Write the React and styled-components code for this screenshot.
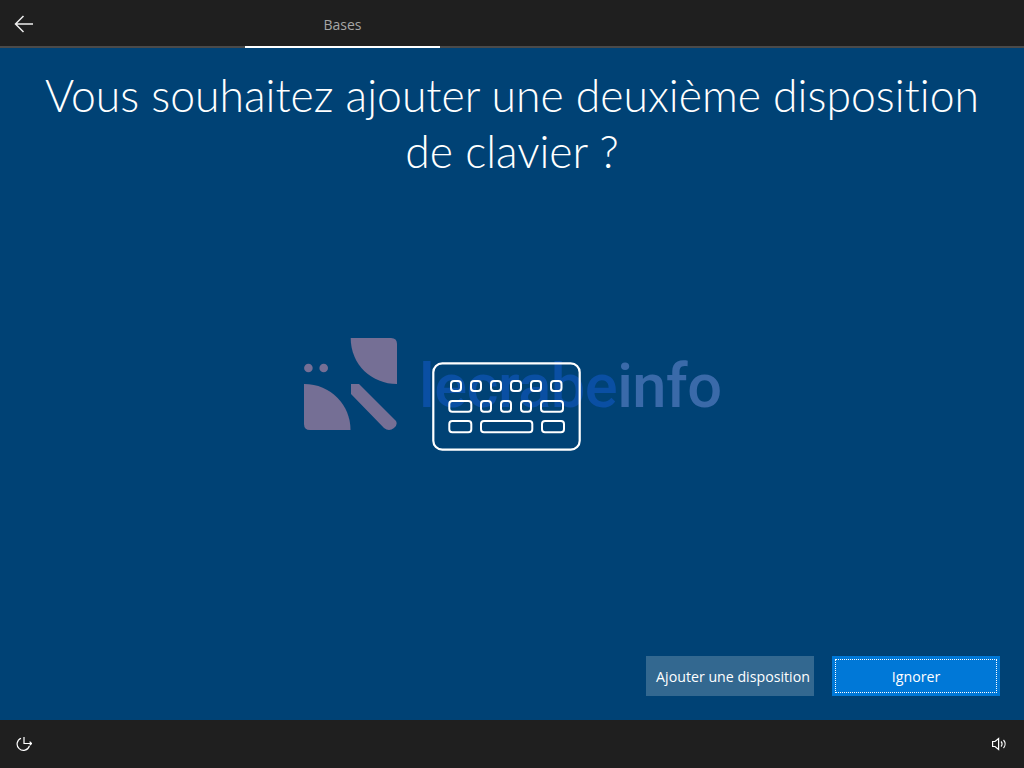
import React from "react";
import styled, { createGlobalStyle } from "styled-components";

const Global = createGlobalStyle`
  html, body { margin: 0; padding: 0; height: 100%; overflow: hidden; background: #004275; }
  #root { height: 100%; }
  * { box-sizing: border-box; }
`;
const FONT = `"Open Sans", "Noto Sans", "Liberation Sans", sans-serif`;

const Page = styled.div`
  position: relative; width: 1024px; height: 768px; display: flex; flex-direction: column;
  background: #004275; font-family: ${FONT}; color: #fff; overflow: hidden;
`;
const TopBar = styled.header`
  height: 48px; flex: none; display: flex; background: #1f1f1f; border-bottom: 2px solid #4a4a4a;
`;
const BackButton = styled.button`
  width: 245px; height: 46px; flex: none; background: none; border: 0; padding: 2px 0 0 14px; display: flex; align-items: center; color: #eee;
`;
const Tab = styled.div`
  width: 195px; height: 48px; flex: none; display: flex; align-items: center; justify-content: center;
  border-bottom: 2px solid #fff; color: #a6a6a6; font-size: 14px; padding-top: 3px;
`;
const Main = styled.main`
  flex: 1; display: flex; flex-direction: column; align-items: center; padding: 19px 24px 24px; min-height: 0;
`;
const Title = styled.h1`
  margin: 0; font-family: "Lato", ${FONT}; font-weight: 300; font-size: 44.5px; line-height: 56px; text-align: center; width: 976px;
  font-variant-ligatures: none;
`;
const Illustration = styled.div`
  position: relative; z-index: 1; flex: 1; display: flex; align-items: center; justify-content: center; padding: 0 11px 22px 0;
`;
const Watermark = styled.div`
  position: absolute; left: 304px; top: 337px; display: flex; align-items: flex-start; gap: 21px;
`;
const WatermarkText = styled.div`
  font-family: "Roboto", "Open Sans", sans-serif; font-size: 61.4px; font-weight: 500; line-height: 64px; margin-top: 17px; color: #0a4fa3; letter-spacing: -0.5px;
`;
const WatermarkAccent = styled.span`
  color: #3a6aa9;
`;
const Actions = styled.div`
  align-self: flex-end; display: flex; gap: 18px;
`;
const Button = styled.button`
  position: relative; height: 40px; width: ${p => p.$w}px; border: 0; padding: ${p => (p.$primary ? "0" : "0 0 0 6px")}; color: #fff;
  font-family: ${FONT}; font-size: 14.2px; background: ${p => (p.$primary ? "#0078d7" : "#336890")};
`;
const FocusRing = styled.span`
  position: absolute; inset: 3px; border: 1px dotted #fff;
`;
const BottomBar = styled.footer`
  height: 48px; flex: none; display: flex; align-items: center; justify-content: space-between; background: #1f1f1f; padding: 0 16px;
`;
const Icon = styled.svg`
  display: block; flex: none;
`;

const keys = [
  [451, 381, 10, 10], [471, 381, 10, 10], [491, 381, 10, 10], [511, 381, 10, 10], [531, 381, 10, 10], [551, 381, 10.5, 10],
  [449.3, 401, 22, 10.7], [481, 401, 10, 10.7], [501, 401, 10, 10.7], [521, 401, 10, 10.7], [541, 401, 22, 10.7],
  [449.3, 421, 22, 11.3], [481, 421, 51.3, 11.3], [542, 421, 22, 11.3],
];

function Keyboard() {
  return (
    <Icon width="150" height="90" viewBox="432 362 150 90" fill="none" stroke="#fff">
      <rect x="433.3" y="363.3" width="146.4" height="86.4" rx="9" strokeWidth="2.2" />
      {keys.map(([x, y, w, h], i) => (
        <rect key={i} x={x} y={y} width={w} height={h} rx="3" strokeWidth="2" />
      ))}
    </Icon>
  );
}

function Logo() {
  return (
    <Icon width="94" height="94" viewBox="0 0 94 94" fill="#756f95">
      <circle cx="4.4" cy="31" r="4.3" />
      <circle cx="19.7" cy="31" r="4.3" />
      <path d="M0 47 C27 47 46.5 68 46.5 93 H6 Q0 93 0 87 Z" />
      <path d="M46.7 1 H87 Q93 1 93 7 V47 C68 47 46.7 28 46.7 1 Z" />
      <path d="M47 47 H55 L92 84 Q94 88 90 91 Q85 95 80 91 L47 57 Z" />
    </Icon>
  );
}

export default function App() {
  return (
    <Page>
      <Global />
      <TopBar>
        <BackButton aria-label="Retour">
          <Icon width="20" height="18" viewBox="0 0 20 18" fill="none" stroke="currentColor" strokeWidth="1.5">
            <path d="M19 9H1.5M9.5 1L1.5 9l8 8" />
          </Icon>
        </BackButton>
        <Tab>Bases</Tab>
      </TopBar>
      <Main>
        <Title>Vous souhaitez ajouter une deuxième disposition de clavier ?</Title>
        <Illustration>
          <Keyboard />
        </Illustration>
        <Actions>
          <Button $w={168}>Ajouter une disposition</Button>
          <Button $w={168} $primary><FocusRing />Ignorer</Button>
        </Actions>
      </Main>
      <Watermark>
        <Logo />
        <WatermarkText>lecrabe<WatermarkAccent>info</WatermarkAccent></WatermarkText>
      </Watermark>
      <BottomBar>
        <Icon width="16" height="16" viewBox="0 0 16 16" fill="none" stroke="#fff" strokeWidth="1.2">
          <path d="M5 2.2A6.3 6.3 0 1 0 13.4 10" />
          <path d="M8 1v7M8 7.5h7.5M13.6 5.6l2 1.9-2 1.9" />
        </Icon>
        <Icon width="16" height="16" viewBox="0 0 16 16" fill="none" stroke="#fff" strokeWidth="1.2">
          <path d="M.6 5.5h2.4L6.6 2.5v11l-3.6-3H.6z" />
          <path d="M9 5.5a3.5 3.5 0 0 1 0 5M11.5 4a6 6 0 0 1 0 8" />
        </Icon>
      </BottomBar>
    </Page>
  );
}
